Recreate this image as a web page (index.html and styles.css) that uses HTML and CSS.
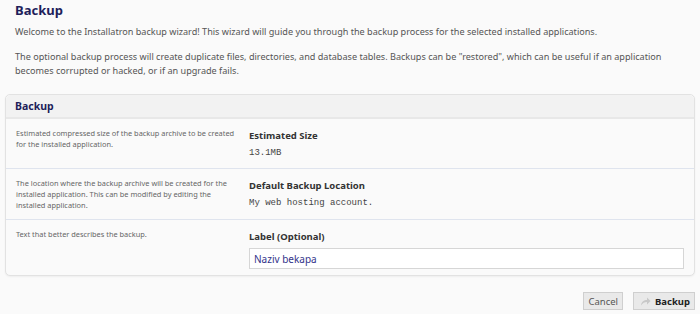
FILE: index.html
```html
<!DOCTYPE html>
<html lang="en">
<head>
    <meta charset="UTF-8">
    <title>Backup</title>
    <link rel="stylesheet" href="styles.css">
</head>
<body>
    <div class="wizard">
        <div class="intro">
            <h1>Backup</h1>
            <p>Welcome to the Installatron backup wizard! This wizard will guide you through the backup process for the selected installed applications.</p>
            <p>The optional backup process will create duplicate files, directories, and database tables. Backups can be "restored", which can be useful if an application becomes corrupted or hacked, or if an upgrade fails.</p>
        </div>
        <div class="panel">
            <div class="panel-head">Backup</div>
            <div class="row">
                <div class="help">Estimated compressed size of the backup archive to be created for the installed application.</div>
                <div class="field">
                    <div class="label">Estimated Size</div>
                    <div class="value">13.1MB</div>
                </div>
            </div>
            <div class="row">
                <div class="help">The location where the backup archive will be created for the installed application. This can be modified by editing the installed application.</div>
                <div class="field">
                    <div class="label">Default Backup Location</div>
                    <div class="value">My web hosting account.</div>
                </div>
            </div>
            <div class="row last">
                <div class="help">Text that better describes the backup.</div>
                <div class="field">
                    <div class="label">Label (Optional)</div>
                    <input type="text" class="text-input" value="Naziv bekapa">
                </div>
            </div>
        </div>
        <div class="actions">
            <button type="button" class="btn">Cancel</button>
            <button type="button" class="btn btn-main">
                <svg width="11" height="10" viewBox="0 0 11 10"><path d="M1 9.5 C1.5 5.5 4 4 7 4 V1.5 L10.5 5 L7 8.5 V6 C4.5 6 2.5 7 1 9.5 Z" fill="#c8c8c8"/></svg>
                Backup
            </button>
        </div>
    </div>
</body>
</html>
```

FILE: styles.css
```css
body {
    margin: 0;
    background-color: #fafafa;
    font-family: "Noto Sans", "Open Sans", Arial, sans-serif;
    color: #555;
}
.wizard {
    padding: 0 5px;
}
.intro {
    padding: 0 10px;
}
h1 {
    margin: 0;
    padding-top: 1px;
    font-size: 13px;
    line-height: 18px;
    color: #1e1e5a;
}
.intro p {
    margin: 6px 0 11px;
    font-size: 9.1px;
    line-height: 14px;
}
.panel {
    margin-top: 16px;
    border: 1px solid #e2e2e2;
    border-radius: 5px;
    background-color: #fafafa;
    box-shadow: 0 1px 2px rgba(0, 0, 0, 0.05);
}
.panel-head {
    background-color: #f2f2f2;
    border-bottom: 2px solid #e8e8e8;
    border-radius: 5px 5px 0 0;
    padding: 0 9px;
    height: 22px;
    line-height: 22px;
    font-size: 10.5px;
    font-weight: bold;
    color: #1e1e5a;
}
.row {
    display: flex;
    border-bottom: 1px solid #dfe4ee;
    padding: 10px 10px 0;
    height: 40px;
}
.row:nth-child(2) {
    height: 39px;
}
.row.last {
    border-bottom: none;
    height: 45px;
}
.help {
    width: 224px;
    margin-top: -1px;
    font-size: 7.4px;
    line-height: 11px;
    color: #666;
}
.field {
    flex: 1;
    margin-left: 9px;
}
.label {
    font-size: 9.5px;
    font-weight: bold;
    color: #333;
    line-height: 14px;
}
.value {
    margin-top: 5px;
    font-family: "Liberation Mono", "Courier New", monospace;
    font-size: 9px;
    color: #444;
}
.text-input {
    display: block;
    box-sizing: border-box;
    width: 100%;
    height: 21px;
    margin-top: 4px;
    border: 1px solid #d6d6d6;
    background-color: #fff;
    padding: 0 4px;
    font-family: "Noto Sans", "Open Sans", Arial, sans-serif;
    font-size: 10px;
    color: #33338a;
}
.actions {
    display: flex;
    justify-content: flex-end;
    gap: 10px;
    margin-top: 16px;
}
.btn {
    height: 18px;
    padding: 0 4px;
    border: 1px solid #cfcfcf;
    background-color: #e9e9e9;
    font-family: "Noto Sans", "Open Sans", Arial, sans-serif;
    font-size: 9.5px;
    color: #555;
    display: flex;
    align-items: center;
    gap: 4px;
}
.btn-main {
    font-weight: bold;
    color: #222;
    padding: 0 4px 0 6px;
}
```
